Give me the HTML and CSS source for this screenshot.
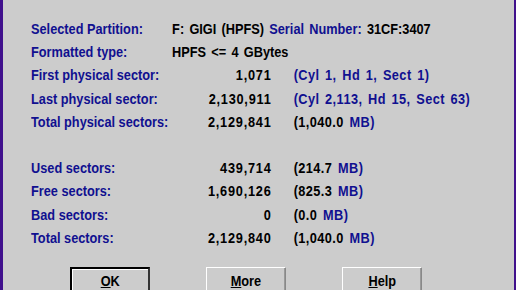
FILE: index.html
```html
<!DOCTYPE html>
<html>
<head>
<meta charset="utf-8">
<link rel="stylesheet" href="styles.css">
</head>
<body>
<div class="dialog">
  <div class="info">
    <div class="row">
      <span class="lbl">Selected Partition:</span>
      <span class="val wide">F: GIGI (HPFS) <span class="lbl">Serial Number:</span> 31CF:3407</span>
    </div>
    <div class="row">
      <span class="lbl">Formatted type:</span>
      <span class="val wide">HPFS &lt;= 4 GBytes</span>
    </div>
    <div class="row">
      <span class="lbl">First physical sector:</span>
      <span class="num">1,071</span>
      <span class="note">(Cyl 1, Hd 1, Sect 1)</span>
    </div>
    <div class="row">
      <span class="lbl">Last physical sector:</span>
      <span class="num">2,130,911</span>
      <span class="note">(Cyl 2,113, Hd 15, Sect 63)</span>
    </div>
    <div class="row">
      <span class="lbl">Total physical sectors:</span>
      <span class="num">2,129,841</span>
      <span class="note"><span class="blk">(1,040.0</span> MB)</span>
    </div>
    <div class="row spacer"></div>
    <div class="row">
      <span class="lbl">Used sectors:</span>
      <span class="num">439,714</span>
      <span class="note"><span class="blk">(214.7</span> MB)</span>
    </div>
    <div class="row">
      <span class="lbl">Free sectors:</span>
      <span class="num">1,690,126</span>
      <span class="note"><span class="blk">(825.3</span> MB)</span>
    </div>
    <div class="row">
      <span class="lbl">Bad sectors:</span>
      <span class="num">0</span>
      <span class="note"><span class="blk">(0.0</span> MB)</span>
    </div>
    <div class="row">
      <span class="lbl">Total sectors:</span>
      <span class="num">2,129,840</span>
      <span class="note"><span class="blk">(1,040.0</span> MB)</span>
    </div>
  </div>
  <div class="buttons">
    <button class="btn default"><span class="cap"><u>O</u>K</span></button>
    <button class="btn"><span class="cap"><u>M</u>ore</span></button>
    <button class="btn"><span class="cap"><u>H</u>elp</span></button>
  </div>
</div>
</body>
</html>
```

FILE: styles.css
```css
html, body {
  margin: 0;
  padding: 0;
  height: 100%;
  overflow: hidden;
}
body {
  background: #cccccc;
  border-left: 3px solid #40108c;
  border-right: 2px solid #40108c;
  box-sizing: border-box;
  font-family: "Liberation Sans", Arial, sans-serif;
  font-weight: bold;
  font-size: 15px;
  color: #000000;
}
.dialog {
  padding: 17px 0 0 28px;
}
.info {
  display: grid;
  grid-template-columns: 166px 116px 1fr;
  grid-auto-rows: 23.2px;
  align-items: center;
  white-space: nowrap;
  transform: scaleX(0.85);
  transform-origin: 0 0;
  width: 560px;
}
.row {
  display: contents;
}
.spacer::before {
  content: "";
  grid-column: 1 / 4;
  height: 23.2px;
}
.lbl {
  color: #101090;
}
.val.wide {
  grid-column: 2 / 4;
  word-spacing: 2px;
}
.num {
  text-align: right;
  letter-spacing: 0.9px;
  margin-right: -1px;
}
.note {
  color: #101090;
  padding-left: 27px;
  letter-spacing: 0.5px;
  word-spacing: 2px;
}
.blk {
  color: #000000;
}
.buttons {
  display: flex;
  gap: 56px;
  padding: 18px 0 0 39px;
}
.btn {
  width: 80px;
  height: 28px;
  background: #cccccc;
  border: 1px solid #888888;
  border-top-color: #ffffff;
  border-left-color: #ffffff;
  box-shadow: inset -1px -1px 0 #999999;
  font-family: "Liberation Sans", Arial, sans-serif;
  font-weight: bold;
  font-size: 15px;
  color: #000000;
  padding: 0;
}
.cap {
  display: inline-block;
  transform: scaleX(0.85);
}
.btn.default {
  border: 2px solid #000000;
  border-right-color: #333333;
  box-shadow: inset 1px 1px 0 #ffffff;
}
```
